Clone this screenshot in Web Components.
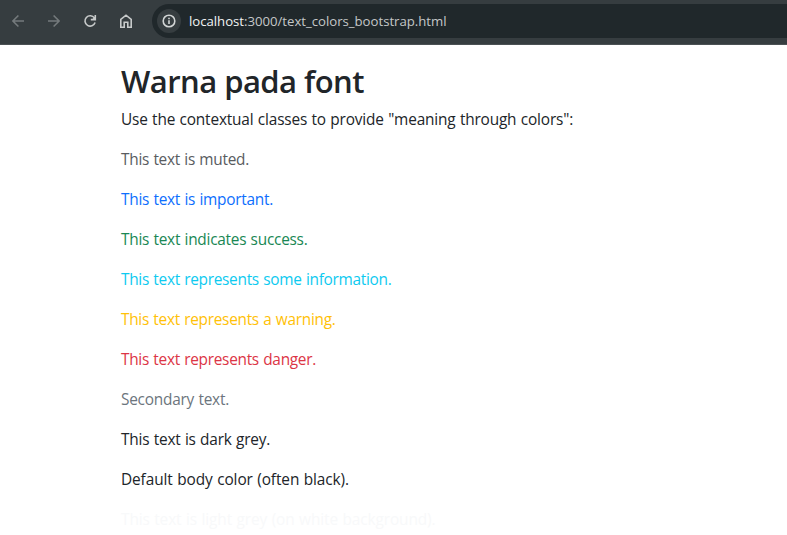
<!DOCTYPE html>
<html lang="id">
<head>
<meta charset="utf-8">
<title>Warna pada font</title>
<style>
html,body{margin:0;height:100%;overflow:hidden;background:#fff}
body{font-family:"Open Sans","Noto Sans",sans-serif;color:#212529}
</style>
</head>
<body>
<app-window></app-window>
<script>
// Text run that spreads its letters to an exact advance width.
customElements.define('fit-text', class extends HTMLElement {
  connectedCallback() {
    const root = this.attachShadow({mode:'open'});
    root.innerHTML = '<style>:host{display:inline-block;white-space:pre}span{display:inline-block}</style><span><slot></slot></span>';
    const span = root.querySelector('span');
    const want = parseFloat(this.getAttribute('width'));
    const n = this.textContent.length;
    this.style.letterSpacing = ((want - span.getBoundingClientRect().width) / n).toFixed(4) + 'px';
  }
});

customElements.define('nav-icon', class extends HTMLElement {
  connectedCallback() {
    const shapes = {
      back: '<path d="M14 8H3.2M8.4 2.5L2.9 8l5.5 5.5"/>',
      forward: '<path d="M2 8h10.8M7.6 2.5L13.1 8l-5.5 5.5"/>',
      reload: '<path d="M12.4 4.9A5.2 5.2 0 1 0 13.1 9.6"/><path d="M13.3 2v4.6H8.8"/><path d="M13.3 3.2v3.4H9.9z" fill="currentColor" stroke="none"/>',
      home: '<path d="M2.8 6.3L8 2.2l5.2 4.1v7.9H9.8V9.3H6.2v4.9H2.8z"/>',
      info: '<circle cx="8" cy="8" r="5.8"/><path d="M8 7.3v3.7M8 4.8v1.5"/>'
    };
    this.attachShadow({mode:'open'}).innerHTML = `<style>
      :host{display:block;width:16px;height:16px}
      svg{display:block;fill:none;stroke:currentColor;stroke-width:1.6}
    </style><svg width="16" height="16" viewBox="0 0 16 16">${shapes[this.getAttribute('name')]}</svg>`;
  }
});

customElements.define('browser-bar', class extends HTMLElement {
  connectedCallback() {
    this.attachShadow({mode:'open'}).innerHTML = `<style>
      :host{display:flex;box-sizing:border-box;height:45px;padding:4px 0 6px 10px;background:#363d40;border-bottom:1px solid #4b5154;align-items:center}
      nav{display:flex;gap:20px;color:#c7caca}
      .off{color:#747a7c}
      .address{flex:1;display:flex;align-items:center;height:34px;margin-left:18px;background:#20282b;border-radius:17px 0 0 17px;padding-left:5px;box-sizing:border-box}
      .badge{display:flex;align-items:center;justify-content:center;width:24px;height:24px;border-radius:50%;background:#363d40;color:#d2d5d5}
      .url{margin-left:8px;font-size:13.2px;line-height:18px;color:#c4c7c8;white-space:nowrap;display:flex}
      .host{color:#f1f3f3}
    </style>
    <nav><nav-icon class="off" name="back"></nav-icon><nav-icon class="off" name="forward"></nav-icon><nav-icon name="reload"></nav-icon><nav-icon name="home"></nav-icon></nav>
    <div class="address"><span class="badge"><nav-icon name="info"></nav-icon></span>
    <div class="url"><fit-text class="host" width="55">localhost</fit-text><fit-text width="202.5">:3000/text_colors_bootstrap.html</fit-text></div></div>`;
  }
});

customElements.define('color-line', class extends HTMLElement {
  connectedCallback() {
    this.attachShadow({mode:'open'}).innerHTML = `<style>
      :host{display:block;font-size:15.4px;line-height:24px;height:24px;margin-bottom:16px;word-spacing:.6px;color:${this.getAttribute('tone') || 'inherit'}}
      fit-text{vertical-align:top}
    </style><fit-text width="${this.getAttribute('width')}">${this.textContent}</fit-text>`;
  }
});

customElements.define('app-window', class extends HTMLElement {
  connectedCallback() {
    this.attachShadow({mode:'open'}).innerHTML = `<style>
      :host{display:block}
      main{padding:17px 0 0 121px}
      h2{margin:0 0 8px;font-size:31px;line-height:38px;height:38px;font-weight:560}
    </style>
    <browser-bar></browser-bar>
    <main>
      <h2><fit-text width="243">Warna pada font</fit-text></h2>
      <color-line width="452">Use the contextual classes to provide "meaning through colors":</color-line>
      <color-line width="128" tone="#595c5f">This text is muted.</color-line>
      <color-line width="152" tone="#0d6efd">This text is important.</color-line>
      <color-line width="186.5" tone="#198754">This text indicates success.</color-line>
      <color-line width="270.5" tone="#0dcaf0">This text represents some information.</color-line>
      <color-line width="214.5" tone="#ffc107">This text represents a warning.</color-line>
      <color-line width="195" tone="#dc3545">This text represents danger.</color-line>
      <color-line width="108" tone="#6c757d">Secondary text.</color-line>
      <color-line width="149" tone="#212529">This text is dark grey.</color-line>
      <color-line width="228" tone="#212529">Default body color (often black).</color-line>
      <color-line width="314.5" tone="#f8f9fa">This text is light grey (on white background).</color-line>
    </main>`;
  }
});
</script>
</body>
</html>
